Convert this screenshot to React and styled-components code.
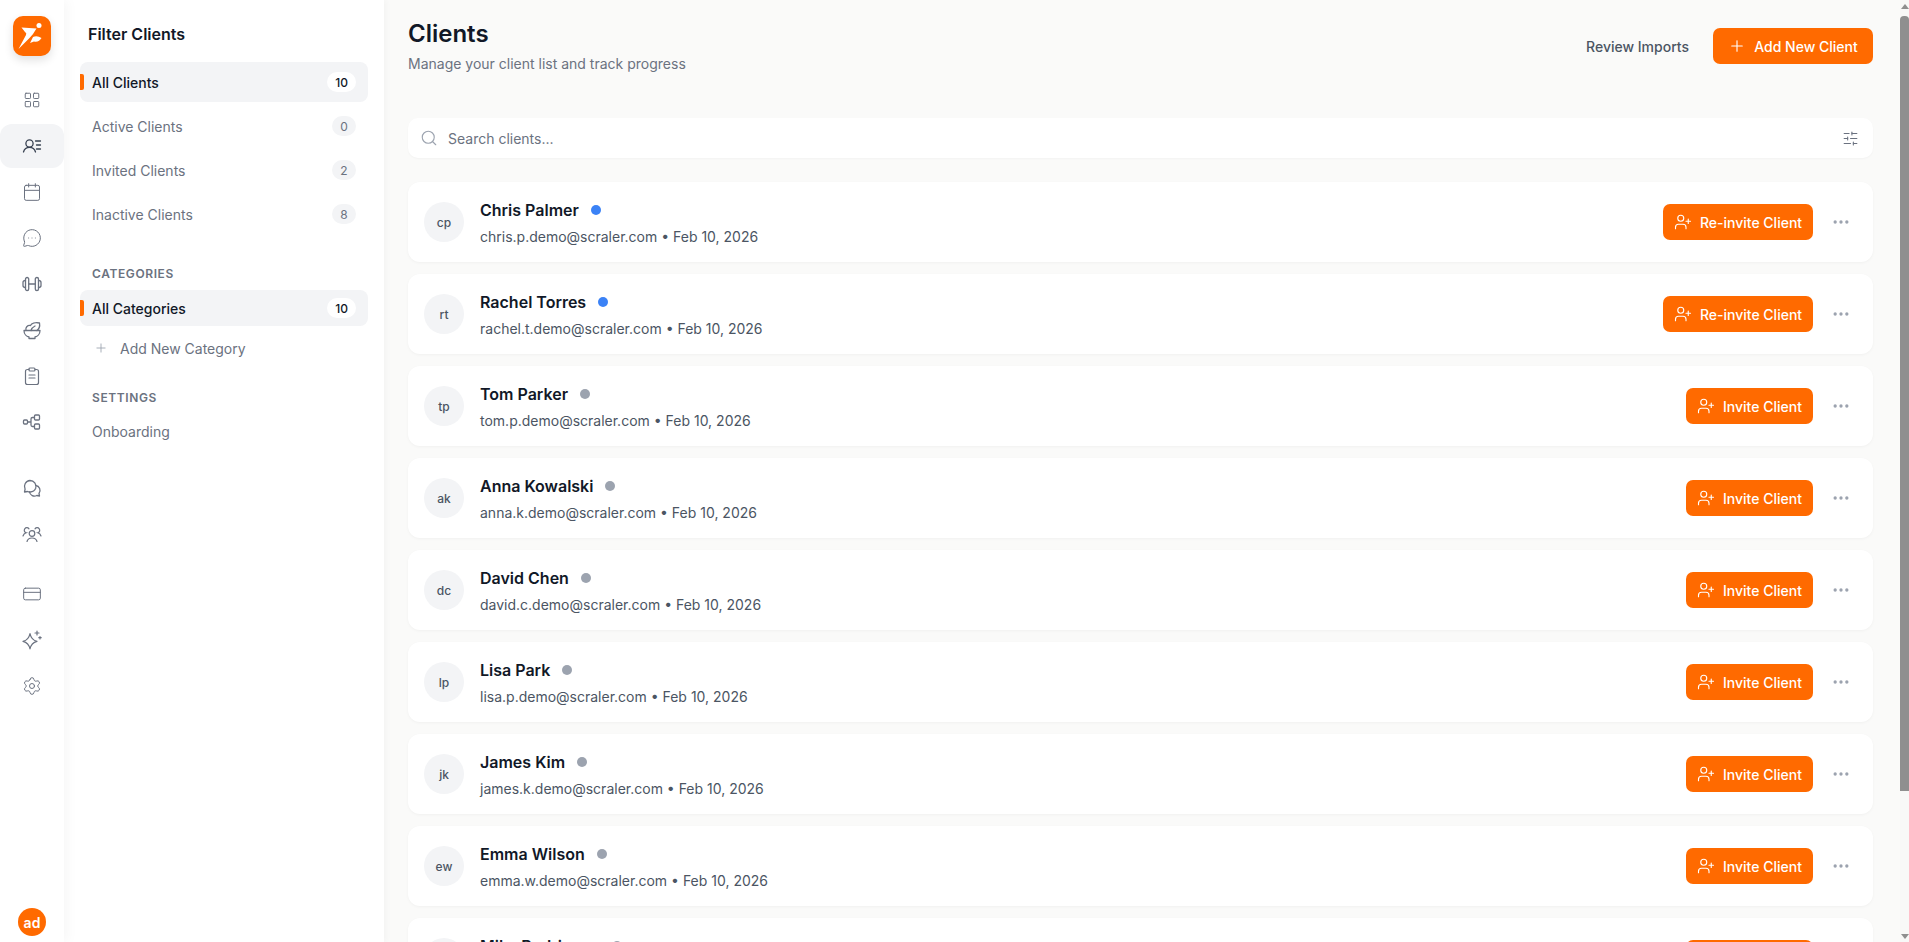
import styled, { createGlobalStyle } from "styled-components";
import {
  Calendar,
  CreditCard,
  LayoutGrid,
  MessageCircleMore,
  MoreHorizontal,
  Plus,
  Search,
  Settings,
  SlidersHorizontal,
  UserPlus,
} from "lucide-react";

const ORANGE = "#ff6a00";

const GlobalStyle = createGlobalStyle`
  * { box-sizing: border-box; }
  html, body, #root { height: 100%; margin: 0; }
  body {
    font-family: Inter, "Liberation Sans", sans-serif;
    overflow: hidden;
    background: #fafaf9;
  }
`;

const Shell = styled.div`
  display: flex;
  height: 942px;
`;

const Rail = styled.nav`
  width: 64px;
  flex-shrink: 0;
  display: flex;
  flex-direction: column;
  align-items: stretch;
  background: #fff;
  padding-top: 16px;
  z-index: 2;
  box-shadow: 3px 0 12px rgba(0, 0, 0, 0.04);
`;

const Logo = styled.div`
  width: 38px;
  height: 40px;
  margin: 0 0 22px 13px;
  border-radius: 10px;
  background: ${ORANGE};
  display: flex;
  align-items: center;
  justify-content: center;
  box-shadow: 0 4px 10px rgba(0, 0, 0, 0.12);
`;

const RailGroup = styled.div`
  display: flex;
  flex-direction: column;
  gap: 2px;
  margin-bottom: ${(p) => p.$after || 0}px;
`;

const RailItem = styled.div`
  height: 44px;
  display: flex;
  align-items: center;
  justify-content: center;
  border-radius: 12px;
  color: ${(p) => (p.$active ? "#374151" : "#6b7280")};
  background: ${(p) => (p.$active ? "#f3f4f6" : "transparent")};
`;

const Avatar = styled.div`
  width: 28px;
  height: 28px;
  margin: auto 0 6px 18px;
  border-radius: 50%;
  background: ${ORANGE};
  color: #fff;
  font-size: 14px;
  font-weight: 600;
  display: flex;
  align-items: center;
  justify-content: center;
`;

const FilterPanel = styled.aside`
  width: 320px;
  flex-shrink: 0;
  background: #fff;
  padding: 24px 16px 0 16px;
  box-shadow: 2px 0 6px rgba(0, 0, 0, 0.03);
  z-index: 1;
`;

const PanelTitle = styled.h2`
  margin: 0 0 18px 8px;
  font-size: 16px;
  line-height: 20px;
  font-weight: 600;
  color: #111827;
`;

const FilterList = styled.div`
  display: flex;
  flex-direction: column;
  gap: 4px;
`;

const FilterRow = styled.div`
  position: relative;
  height: 40px;
  display: flex;
  align-items: center;
  justify-content: space-between;
  padding: 0 12px;
  border-radius: 8px;
  font-size: 14px;
  font-weight: ${(p) => (p.$active ? 500 : 400)};
  color: ${(p) => (p.$active ? "#111827" : "#6b7280")};
  background: ${(p) => (p.$active ? "#f3f4f6" : "transparent")};

  ${(p) =>
    p.$active &&
    `&::before {
      content: "";
      position: absolute;
      left: 0;
      top: 50%;
      width: 4px;
      height: 16px;
      margin-top: -8px;
      background: ${ORANGE};
      border-radius: 0 2px 2px 0;
    }`}
`;

const CategoryRow = styled(FilterRow)`
  height: 36px;
`;

const Count = styled.span`
  min-width: 24px;
  height: 20px;
  padding: 0 8px;
  border-radius: 10px;
  font-size: 12px;
  display: flex;
  align-items: center;
  justify-content: center;
  color: ${(p) => (p.$active ? "#111827" : "#6b7280")};
  background: ${(p) => (p.$active ? "#fff" : "#f3f4f6")};
`;

const SectionLabel = styled.div`
  margin: ${(p) => p.$top}px 0 ${(p) => p.$bottom}px 12px;
  font-size: 12px;
  line-height: 16px;
  font-weight: 600;
  letter-spacing: 0.6px;
  color: #6b7280;
`;

const AddCategory = styled.div`
  height: 36px;
  margin-top: 4px;
  display: flex;
  align-items: center;
  gap: 12px;
  padding-left: 14px;
  font-size: 14px;
  color: #6b7280;

  svg {
    color: #9ca3af;
  }
`;

const PlainLink = styled.div`
  height: 20px;
  margin-left: 12px;
  font-size: 14px;
  line-height: 20px;
  color: #6b7280;
`;

const Main = styled.main`
  flex: 1;
  min-width: 0;
  display: flex;
  height: 942px;
  background: #fafaf9;
`;

const Content = styled.div`
  flex: 1;
  min-width: 0;
  height: 942px;
  overflow: hidden;
  padding: 24px 27px 0 24px;
`;

const ScrollTrack = styled.div`
  width: 9px;
  flex-shrink: 0;
  height: 942px;
  display: flex;
  flex-direction: column;
  align-items: center;
  background: #f8f8f7;
`;

const ScrollArrow = styled.div`
  width: 0;
  height: 0;
  margin: ${(p) => (p.$down ? "auto 0 3px" : "4px 0 7px")};
  border-left: 4.5px solid transparent;
  border-right: 4.5px solid transparent;
  ${(p) => (p.$down ? "border-top" : "border-bottom")}: 5px solid #8f8f8f;
`;

const ScrollThumb = styled.div`
  width: 9px;
  height: 775px;
  background: #8f8f8f;
  border-radius: 4px 4px 0 0;
`;

const Header = styled.header`
  display: flex;
  justify-content: space-between;
  align-items: flex-start;
  margin-bottom: 44px;
`;

const Title = styled.h1`
  margin: 0;
  font-size: 24px;
  line-height: 20px;
  font-weight: 600;
  color: #111827;
`;

const Subtitle = styled.p`
  margin: 10px 0 0;
  font-size: 14px;
  line-height: 20px;
  color: #6b7280;
`;

const HeaderActions = styled.div`
  display: flex;
  align-items: center;
  gap: 24px;
  margin-top: 4px;
`;

const TextButton = styled.span`
  font-size: 14px;
  font-weight: 500;
  color: #4b5563;
`;

const OrangeButton = styled.button`
  height: 36px;
  width: ${(p) => p.$width}px;
  border: 0;
  border-radius: 7px;
  background: ${ORANGE};
  color: #fff;
  font-family: inherit;
  font-size: 14px;
  font-weight: 500;
  display: flex;
  align-items: center;
  justify-content: center;
  gap: 8px;
  padding: 0;
`;

const SearchBar = styled.div`
  height: 40px;
  margin-bottom: 24px;
  padding: 0 14px 0 12px;
  display: flex;
  align-items: center;
  gap: 10px;
  background: #fff;
  border-radius: 10px;
  box-shadow: 0 1px 2px rgba(0, 0, 0, 0.03);
  font-size: 14px;
  color: #6b7280;
`;

const SearchText = styled.span`
  flex: 1;
`;

const ClientList = styled.div`
  display: flex;
  flex-direction: column;
  gap: 12px;
`;

const Card = styled.article`
  height: 80px;
  padding: 0 18px 0 16px;
  display: flex;
  align-items: center;
  background: #fff;
  border-radius: 12px;
  box-shadow: 0 1px 3px rgba(0, 0, 0, 0.04);
`;

const Initials = styled.div`
  width: 40px;
  height: 40px;
  margin-right: 16px;
  flex-shrink: 0;
  border-radius: 50%;
  background: #f3f4f6;
  color: #4b5563;
  font-size: 12px;
  font-weight: 500;
  display: flex;
  align-items: center;
  justify-content: center;
`;

const ClientInfo = styled.div`
  flex: 1;
  min-width: 0;
`;

const NameRow = styled.div`
  display: flex;
  align-items: center;
  gap: 12px;
  margin-bottom: 5px;
`;

const Name = styled.span`
  font-size: 16px;
  line-height: 24px;
  font-weight: 600;
  color: #111827;
`;

const Dot = styled.span`
  width: 10px;
  height: 10px;
  border-radius: 50%;
  background: ${(p) => (p.$invited ? "#3b82f6" : "#9ca3af")};
`;

const Meta = styled.div`
  font-size: 14px;
  line-height: 20px;
  color: #4b5563;
`;

const MoreButton = styled.span`
  width: 28px;
  margin-left: 14px;
  display: flex;
  justify-content: center;
  color: #9ca3af;
`;

const clients = [
  { name: "Chris Palmer", email: "chris.p.demo@scraler.com", invited: true },
  { name: "Rachel Torres", email: "rachel.t.demo@scraler.com", invited: true },
  { name: "Tom Parker", email: "tom.p.demo@scraler.com" },
  { name: "Anna Kowalski", email: "anna.k.demo@scraler.com" },
  { name: "David Chen", email: "david.c.demo@scraler.com" },
  { name: "Lisa Park", email: "lisa.p.demo@scraler.com" },
  { name: "James Kim", email: "james.k.demo@scraler.com" },
  { name: "Emma Wilson", email: "emma.w.demo@scraler.com" },
  { name: "Mike Rodriguez", email: "mike.r.demo@scraler.com" },
];

const initials = (name) =>
  name
    .split(" ")
    .map((part) => part[0].toLowerCase())
    .join("");

const LogoMark = () => (
  <svg width="30" height="30" viewBox="0 0 30 30" fill="#fff">
    <circle cx="22" cy="4.500" r="2.500" />
    <path d="M4.500 6.500 L19.500 7.500 Q16.500 13 12.500 17 L1.500 28 L9 14 Q10 12 8 11 Z" />
    <path d="M13 22 L16 16 Q20 14 24.500 17 Q22 21.500 17 20.500 Z" />
  </svg>
);

const UserListIcon = () => (
  <svg width="20" height="20" viewBox="0 0 20 20" fill="none" stroke="currentColor" strokeWidth="1.3" strokeLinecap="round">
    <circle cx="7.500" cy="7.500" r="3.600" />
    <path d="M1.500 16c.8-2.800 3-4.600 6-4.600s5.200 1.800 6 4.600" />
    <path d="M13.500 5h5M14.500 9h4M14.500 13h4" />
  </svg>
);

const DumbbellIcon = () => (
  <svg width="20" height="20" viewBox="0 0 20 20" fill="none" stroke="currentColor" strokeWidth="1.3" strokeLinecap="round" strokeLinejoin="round">
    <rect x="3.500" y="3.500" width="3.200" height="13" rx="1.600" />
    <rect x="13.300" y="3.500" width="3.200" height="13" rx="1.600" />
    <path d="M6.700 10h6.600M3.500 6.500c-1.700 0-2.500.8-2.500 2v3c0 1.200.8 2 2.500 2M16.500 6.500c1.700 0 2.500.8 2.500 2v3c0 1.200-.8 2-2.500 2" />
  </svg>
);

const NutritionIcon = () => (
  <svg width="20" height="20" viewBox="0 0 20 20" fill="none" stroke="currentColor" strokeWidth="1.3" strokeLinecap="round" strokeLinejoin="round">
    <path d="M2 10.500h16c0 3.500-2.500 6-5 6.500v1.500H7V17c-2.500-.5-5-3-5-6.500Z" />
    <path d="M4 10.500C3 7.500 5.500 5 8.500 5.500c1-2 4.500-3.500 9-2.500.6 3.500-.5 6-2.500 7.500" />
    <path d="M9 10.500c.5-2 2-3.500 4-4.500" />
  </svg>
);

const ClipboardIcon = () => (
  <svg width="20" height="20" viewBox="0 0 20 20" fill="none" stroke="currentColor" strokeWidth="1.200" strokeLinecap="round" strokeLinejoin="round">
    <path d="M7 3.500H5.500C4.500 3.500 3.500 4.300 3.500 5.500v11c0 1.200 1 2 2 2h9c1 0 2-.8 2-2v-11c0-1.200-1-2-2-2H13" />
    <rect x="7" y="2" width="6" height="3" rx="1" />
    <path d="M7 9h6M7 12h6" />
  </svg>
);

const FlowIcon = () => (
  <svg width="20" height="20" viewBox="0 0 20 20" fill="none" stroke="currentColor" strokeWidth="1.3" strokeLinejoin="round">
    <rect x="1.500" y="8" width="4" height="4" rx="1" />
    <rect x="12.500" y="3" width="5" height="5" rx="1" />
    <rect x="12.500" y="12" width="5" height="5" rx="1" />
    <path d="M5.500 10H9M12.500 5.500H10.500C9.500 5.500 9 6 9 7v6c0 1 .5 1.500 1.500 1.500h2" />
  </svg>
);

const ChatsIcon = () => (
  <svg width="20" height="20" viewBox="0 0 20 20" fill="none" stroke="currentColor" strokeWidth="1.3" strokeLinecap="round" strokeLinejoin="round">
    <path d="M8 2.500a6 6 0 0 1 5.700 7.800A6 6 0 0 1 8 14a6 6 0 0 1-2.500-.5L2.500 14l.6-2.800A6 6 0 0 1 8 2.500Z" />
    <path d="M13.700 7.500a5 5 0 0 1 3.300 8l.5 2.500-2.700-.5a5 5 0 0 1-7.300-3.500" />
  </svg>
);

const TeamIcon = () => (
  <svg width="20" height="20" viewBox="0 0 20 20" fill="none" stroke="currentColor" strokeWidth="1.200" strokeLinecap="round">
    <circle cx="10" cy="9.500" r="2.800" />
    <path d="M5 17.500c.6-2.300 2.600-3.500 5-3.500s4.400 1.200 5 3.500" />
    <path d="M7 4.800a2.600 2.600 0 1 0-2.800 4C2.800 9.300 1.500 10.500 1 12M13 4.800a2.600 2.600 0 1 1 2.800 4c1.400.5 2.700 1.700 3.200 3.200" />
  </svg>
);

const SparkleIcon = () => (
  <svg width="20" height="20" viewBox="0 0 20 20" fill="none" stroke="currentColor" strokeWidth="1.200" strokeLinejoin="round" strokeLinecap="round">
    <path d="M8 3.500c.9 4.700 2.800 6.800 7 7.800-4.200 1-6.100 3.100-7 7.700-.9-4.600-2.800-6.700-7-7.700 4.200-1 6.100-3.100 7-7.800Z" />
    <path d="M15 1v4M13 3h4M18 6.500v2.500M16.800 7.700h2.400" />
  </svg>
);

const railIconProps = { size: 20, strokeWidth: 1.200 };

const App = () => {
  return (
    <Shell>
      <GlobalStyle />
      <Rail>
        <Logo>
          <LogoMark />
        </Logo>
        <RailGroup $after={22}>
          <RailItem><LayoutGrid size={18} strokeWidth={1.300} /></RailItem>
          <RailItem $active><UserListIcon /></RailItem>
          <RailItem><Calendar {...railIconProps} /></RailItem>
          <RailItem><MessageCircleMore {...railIconProps} /></RailItem>
          <RailItem><DumbbellIcon /></RailItem>
          <RailItem><NutritionIcon /></RailItem>
          <RailItem><ClipboardIcon /></RailItem>
          <RailItem><FlowIcon /></RailItem>
        </RailGroup>
        <RailGroup $after={16}>
          <RailItem><ChatsIcon /></RailItem>
          <RailItem><TeamIcon /></RailItem>
        </RailGroup>
        <RailGroup>
          <RailItem><CreditCard {...railIconProps} /></RailItem>
          <RailItem><SparkleIcon /></RailItem>
          <RailItem><Settings {...railIconProps} /></RailItem>
        </RailGroup>
        <Avatar>ad</Avatar>
      </Rail>

      <FilterPanel>
        <PanelTitle>Filter Clients</PanelTitle>
        <FilterList>
          <FilterRow $active>All Clients<Count $active>10</Count></FilterRow>
          <FilterRow>Active Clients<Count>0</Count></FilterRow>
          <FilterRow>Invited Clients<Count>2</Count></FilterRow>
          <FilterRow>Inactive Clients<Count>8</Count></FilterRow>
        </FilterList>
        <SectionLabel $top={32} $bottom={8}>CATEGORIES</SectionLabel>
        <CategoryRow $active>All Categories<Count $active>10</Count></CategoryRow>
        <AddCategory><Plus size={14} strokeWidth={1.500} />Add New Category</AddCategory>
        <SectionLabel $top={24} $bottom={16}>SETTINGS</SectionLabel>
        <PlainLink>Onboarding</PlainLink>
      </FilterPanel>

      <Main>
        <Content>
          <Header>
            <div>
              <Title>Clients</Title>
              <Subtitle>Manage your client list and track progress</Subtitle>
            </div>
            <HeaderActions>
              <TextButton>Review Imports</TextButton>
              <OrangeButton $width={160}>
                <Plus size={18} strokeWidth={1.500} />
                Add New Client
              </OrangeButton>
            </HeaderActions>
          </Header>

          <SearchBar>
            <Search size={18} strokeWidth={1.500} color="#9ca3af" />
            <SearchText>Search clients...</SearchText>
            <SlidersHorizontal size={17} strokeWidth={1.500} color="#6b7280" />
          </SearchBar>

          <ClientList>
            {clients.map((client) => (
              <Card key={client.email}>
                <Initials>{initials(client.name)}</Initials>
                <ClientInfo>
                  <NameRow>
                    <Name>{client.name}</Name>
                    <Dot $invited={client.invited} />
                  </NameRow>
                  <Meta>{client.email} • Feb 10, 2026</Meta>
                </ClientInfo>
                <OrangeButton $width={client.invited ? 150 : 127}>
                  <UserPlus size={18} strokeWidth={1.500} />
                  {client.invited ? "Re-invite Client" : "Invite Client"}
                </OrangeButton>
                <MoreButton><MoreHorizontal size={20} strokeWidth={2} /></MoreButton>
              </Card>
            ))}
          </ClientList>
        </Content>
        <ScrollTrack>
          <ScrollArrow />
          <ScrollThumb />
          <ScrollArrow $down />
        </ScrollTrack>
      </Main>
    </Shell>
  );
};

export default App;
